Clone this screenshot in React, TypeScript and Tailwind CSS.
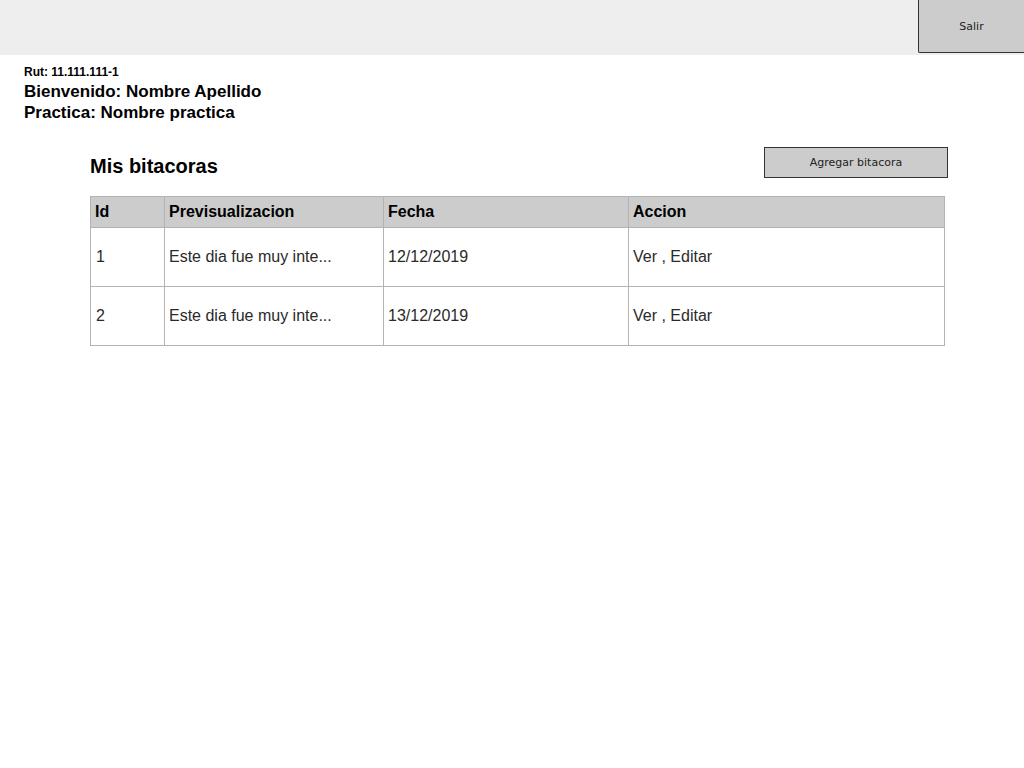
const rows = [
  { id: "1", preview: "Este dia fue muy inte...", fecha: "12/12/2019" },
  { id: "2", preview: "Este dia fue muy inte...", fecha: "13/12/2019" },
];

const sketch = { fontFamily: '"Comic Sans MS", "DejaVu Sans", sans-serif' };

export default function App() {
  return (
    <div
      className="min-h-[768px] w-[1024px] bg-white text-black"
      style={{ fontFamily: '"Liberation Sans", Arial, sans-serif' }}
    >
      <header className="flex h-[55px] justify-end bg-[#eeeeee]">
        <button
          className="h-[53px] w-[106px] rounded-bl-[2px] border border-t-0 border-r-0 border-[#333] bg-[#cccccc] pt-[2px] text-[11px] text-[#222]"
          style={sketch}
        >
          Salir
        </button>
      </header>

      <div className="px-6 pt-[10px]">
        <p className="text-[12px] font-bold leading-[14px]">Rut: 11.111.111-1</p>
        <p className="mt-[2px] text-[17px] font-bold leading-[21px]">Bienvenido: Nombre Apellido</p>
        <p className="text-[17px] font-bold leading-[21px]">Practica: Nombre practica</p>
      </div>

      <main className="ml-[90px] mt-[24px] w-[858px]">
        <div className="flex items-start justify-between">
          <h1 className="mt-[7px] text-[20px] font-bold leading-[24px]">Mis bitacoras</h1>
          <button
            className="h-[31px] w-[184px] border border-[#333] bg-[#cccccc] pt-[2px] text-[11px] text-[#222]"
            style={sketch}
          >
            Agregar bitacora
          </button>
        </div>

        <table className="mt-[18px] w-[855px] border-collapse text-[16px] text-[#2a2a2a]">
          <colgroup>
            <col className="w-[74px]" />
            <col className="w-[219px]" />
            <col className="w-[245px]" />
            <col />
          </colgroup>
          <thead>
            <tr className="h-[31px] bg-[#cccccc] text-black">
              {["Id", "Previsualizacion", "Fecha", "Accion"].map((h) => (
                <th key={h} className="border border-[#b3b3b3] px-[4px] text-left font-bold">
                  {h}
                </th>
              ))}
            </tr>
          </thead>
          <tbody>
            {rows.map((r) => (
              <tr key={r.id} className="h-[59px]">
                <td className="border border-[#b3b3b3] px-[5px]">{r.id}</td>
                <td className="border border-[#b3b3b3] px-[4px]">{r.preview}</td>
                <td className="border border-[#b3b3b3] px-[4px]">{r.fecha}</td>
                <td className="border border-[#b3b3b3] px-[4px]">Ver , Editar</td>
              </tr>
            ))}
          </tbody>
        </table>
      </main>
    </div>
  );
}
